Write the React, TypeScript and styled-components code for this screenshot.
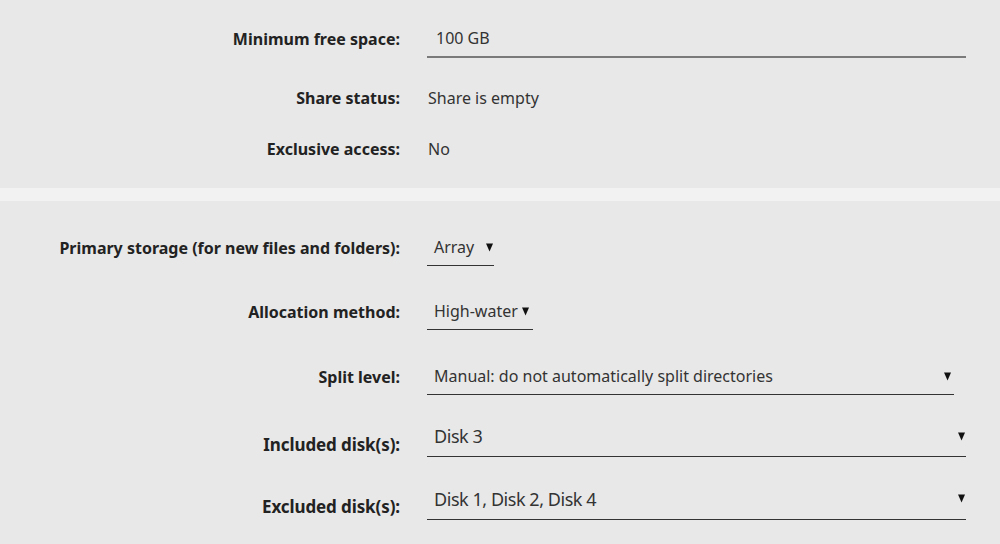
import React from "react"
import styled, { createGlobalStyle } from "styled-components"

const GlobalStyle = createGlobalStyle`
  html, body {
    margin: 0;
    padding: 0;
    background: #e8e8e8;
  }
  body {
    font-family: "Noto Sans", "Open Sans", sans-serif;
    font-size: 16px;
    color: #333;
  }
`

const Page = styled.div`
  width: 1000px;
  height: 544px;
  overflow: hidden;
  background: #e8e8e8;
`

const Section = styled.div<{ $top?: number; $bottom?: number }>`
  display: flex;
  flex-direction: column;
  padding-top: ${p => p.$top || 0}px;
  padding-bottom: ${p => p.$bottom || 0}px;
`

const Divider = styled.div`
  height: 13px;
  background: #f2f2f2;
`

const Row = styled.div<{ $h: number }>`
  display: grid;
  grid-template-columns: 400px 1fr;
  column-gap: 27px;
  align-items: center;
  height: ${p => p.$h}px;
`

const Label = styled.div`
  text-align: right;
  font-weight: 700;
  font-size: 16px;
  color: #222;
  white-space: nowrap;
`

const DiskLabel = styled(Label)`
  padding-top: 14px;
  font-size: 17px;
  letter-spacing: -0.1px;
`

const Value = styled.div`
  font-size: 16px;
  color: #333;
  padding-left: 1px;
`

const TextInput = styled.div`
  box-sizing: border-box;
  width: 539px;
  height: 39px;
  padding: 0 9px;
  display: flex;
  align-items: center;
  border-bottom: 2px solid #7a7a7a;
  color: #333;
`

const Select = styled.div<{ $w: number }>`
  box-sizing: border-box;
  width: ${p => p.$w}px;
  height: 37px;
  padding: 0 0 0 7px;
  display: flex;
  align-items: center;
  justify-content: space-between;
  border-bottom: 1px solid #333;
  color: #333;
  white-space: nowrap;
`

const Multi = styled.div`
  box-sizing: border-box;
  width: 539px;
  height: 40px;
  padding: 8px 0 0 7px;
  display: flex;
  align-items: flex-start;
  justify-content: space-between;
  border-bottom: 1px solid #333;
  color: #333;
  font-size: 18px;
  line-height: 22px;
  letter-spacing: -0.45px;
  white-space: nowrap;
`

const ArrowWrap = styled.span<{ $right?: number }>`
  display: flex;
  align-items: center;
  height: 22px;
  margin-right: ${p => p.$right ?? 1}px;
`

const Arrow: React.FC<{ right?: number }> = ({ right }) => (
  <ArrowWrap $right={right}>
    <svg width="7" height="9" viewBox="0 0 7 9">
      <polygon points="0,0.5 7,0.5 3.5,8.5" fill="#111" />
    </svg>
  </ArrowWrap>
)

const App: React.FC = () => {
  return (
    <Page>
      <GlobalStyle />
      <Section $bottom={10}>
        <Row $h={77}>
          <Label>Minimum free space:</Label>
          <TextInput>100 GB</TextInput>
        </Row>
        <Row $h={42}>
          <Label>Share status:</Label>
          <Value>Share is empty</Value>
        </Row>
        <Row $h={59}>
          <Label>Exclusive access:</Label>
          <Value>No</Value>
        </Row>
      </Section>
      <Divider />
      <Section $top={21}>
        <Row $h={51}>
          <Label>Primary storage (for new files and folders):</Label>
          <Select $w={67}>
            Array <Arrow />
          </Select>
        </Row>
        <Row $h={77}>
          <Label>Allocation method:</Label>
          <Select $w={106}>
            High-water<Arrow right={4} />
          </Select>
        </Row>
        <Row $h={53}>
          <Label>Split level:</Label>
          <Select $w={527}>
            Manual: do not automatically split directories <Arrow right={3} />
          </Select>
        </Row>
        <Row $h={68}>
          <DiskLabel>Included disk(s):</DiskLabel>
          <Multi>
            Disk 3 <Arrow right={1} />
          </Multi>
        </Row>
        <Row $h={57}>
          <DiskLabel>Excluded disk(s):</DiskLabel>
          <Multi>
            Disk 1, Disk 2, Disk 4 <Arrow right={1} />
          </Multi>
        </Row>
      </Section>
    </Page>
  )
}

export default App
